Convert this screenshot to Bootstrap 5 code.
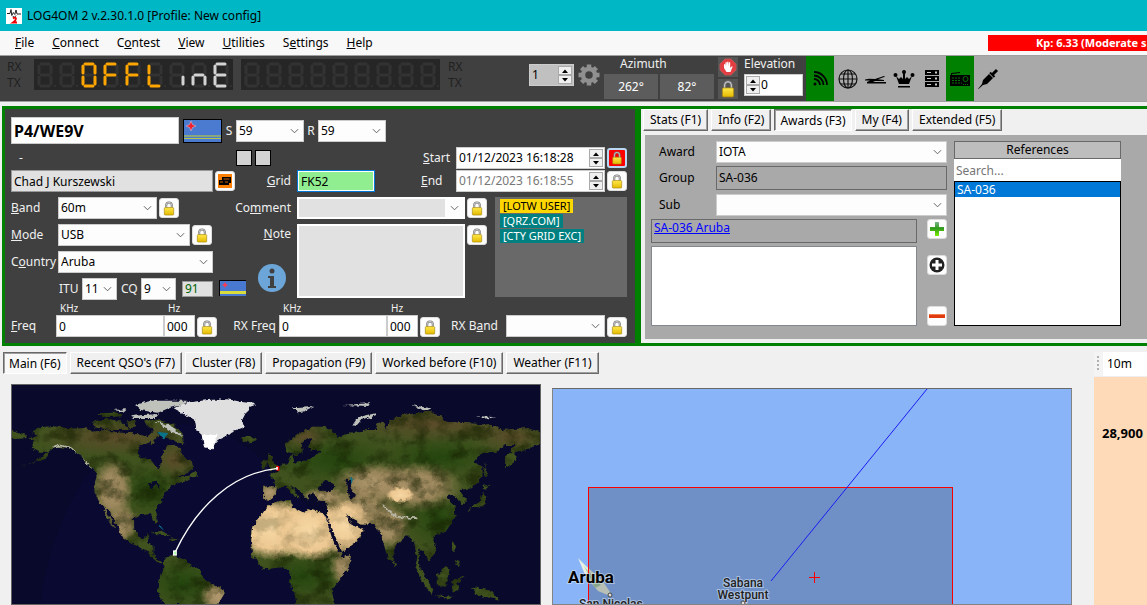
<!DOCTYPE html>
<html lang="en">
<head>
<meta charset="utf-8">
<meta name="viewport" content="width=device-width, initial-scale=1">
<title>LOG4OM 2</title>
<link href="https://cdn.jsdelivr.net/npm/bootstrap@5.3.0/dist/css/bootstrap.min.css" rel="stylesheet">
<style>
body{font:12px/16px "Noto Sans","Open Sans",sans-serif;background:#f0f0f0;color:#000;height:100vh;overflow:hidden}
svg{display:block}
button{padding:0;color:inherit;font:inherit}
.titlebar{background:#00b7c6;height:31px;padding-left:6px;gap:5px}
.menubar{background:#f8f8f8;height:24px;padding-left:6px}
.menubar .nav-link{color:#000;padding:0 9px}
.kp{background:#f00;color:#fff;font-weight:700;font-size:11px;width:159px;height:16px;padding-left:48px}
.toolbar-main{background:#404040;border-top:1px solid #a0a0a0;border-bottom:1px solid #a0a0a0;height:47px}
.lcd{background:#262626;width:199px;height:31px}
.rxtx{color:#202020;width:34px;padding:3px 0 0 7px;height:45px}
.az{background:#5c5c5c;color:#fff;border:0;width:54px;height:25px}
.white-lbl{color:#f0f0f0}
.tools{background:#a9a9a9}
.tool{width:28px;height:45px;border:0;background:transparent;display:flex;align-items:center;justify-content:center}
.tool.on{background:#008000}
.tiny{width:20px;height:20px;border:0;background:#555;display:flex;align-items:center;justify-content:center}
.frame{border:3px solid #008000}
.qso{background:#404040;color:#f0f0f0;padding:8px 8px 6px 6px;width:636px}
.fld{height:22px;border:1px solid #ccc;border-radius:0;background-color:#fff;color:#000;font-size:12px;line-height:16px;padding:0 2px;min-width:0}
select.fld{appearance:none;background:#fdfdfd url("data:image/svg+xml,%3Csvg xmlns='http://www.w3.org/2000/svg' viewBox='0 0 10 6'%3E%3Cpath d='M1 1l4 4 4-4' fill='none' stroke='%23555'/%3E%3C/svg%3E") no-repeat right 4px center/9px 6px}
#cm{box-shadow:inset 146px 0 0 0 #e1e1e1;border:2px solid #fff}
.call{width:168px;height:27px;font-size:16px;font-weight:700}
.gray-in{background:#e1e1e1;border:1px solid #999}
.lk{width:20px;height:20px;border:1px solid #ddd;border-radius:3px;background:#fdfdfd;display:flex;align-items:center;justify-content:center;flex:none}
.near{margin-left:2px}
.spinbox{background:#fff;color:#000;border:1px solid #ccc;height:22px;display:flex;align-items:center;padding:0 1px}
.spinbox input{border:0;background:transparent;min-width:0;flex:1;padding:0 0 0 1px;outline:0;font:inherit;color:inherit}
.spin{width:14px;flex:none}
.spin button{display:flex;align-items:center;justify-content:center;width:14px;height:9px;border:1px solid #aaa;background:#f0f0f0;color:#000}
.w35{width:35px}.w68{width:68px}.w78{width:78px}.w99{width:99px}.w108{width:108px}.w132{width:132px}.w149{width:149px}.w155{width:155px}.w168{width:168px}.w202{width:202px}
.lbl{width:47px;flex:none}
.rlbl{text-align:right;padding-right:6px;flex:none}
.line{display:flex;align-items:center;height:22px}
.sq{width:16px;height:16px;background:#d3d3d3;border:1px solid #000}
.gap5{gap:5px}
.info{background:#696969;width:132px;height:100px;padding:2px 5px;color:#fff;font-size:11px;line-height:14px}
.info span{padding:0 3px;margin-bottom:1px}
.tip{font-size:10px;line-height:13px}
.tabbtn{height:22px;border:1px solid;border-color:#fff #696969 #696969 #fff;box-shadow:inset -1px -1px #a0a0a0;background:#f0f0f0;padding:0 6px;white-space:nowrap}
.tabbtn.active{border-color:#696969 #fff #fff #696969;box-shadow:inset 1px 1px #a0a0a0;background:#f8f8f8;padding:2px 5px 0}
.awards{background:#a9a9a9;margin:4px 0 4px 4px;padding:6px}
.grbox{border:1px solid #696969;height:24px;padding:3px 2px;background:#a9a9a9}
.awl{width:65px;padding-left:8px;flex:none}
.refs{width:167px}
.refhead{border:1px solid #696969;height:18px;line-height:16px;background:#bdbdbd;text-align:center}
.reflist{border:1px solid #000;background:#fff;height:145px}
.reflist button{background:#0078d7;color:#fff;border:0;height:15px;line-height:15px;text-align:left;width:100%;padding-left:2px;display:block}
.world{flex:530 1 0;border:1px solid #646464;background:#09092c;min-width:0}
.local{flex:520 1 0;border:1px solid #848484;border-top-color:#696969;background:#8ab4f8;margin:4px 22px 0 11px;min-width:0}
.bandcol{width:53px;background:#ffdab9;margin-top:-32px;overflow:hidden}
.bandhead{height:25px;background:#fff;border-bottom:1px solid #eee}
.grip{width:9px;background:#f4f4f4;padding:4px 0 0 3px}
</style>
</head>
<body class="d-flex flex-column">
<svg width="0" height="0" class="position-absolute" aria-hidden="true">
<linearGradient id="gold" x2="0" y2="1"><stop stop-color="#ffe94a"/><stop offset="1" stop-color="#e3b800"/></linearGradient>
<linearGradient id="grn" x2="0" y2="1"><stop stop-color="#7ab68b"/><stop offset=".45" stop-color="#2f9a1c"/><stop offset="1" stop-color="#7af000"/></linearGradient>
<symbol id="lock" viewBox="0 0 14 16"><path d="M4 8V4.500a3 3 0 0 1 6 0V8" fill="none" stroke="#777" stroke-width="2.200"/><path d="M4 8V4.500a3 3 0 0 1 6 0V8" fill="none" stroke="#ddd" stroke-width=".8"/><rect x="2" y="7" width="10" height="8" rx="1" fill="url(#gold)" stroke="#a88a10" stroke-width=".7"/></symbol>
<symbol id="up" viewBox="0 0 6 4"><path d="M0 4l3-3.500L6 4z"/></symbol>
<symbol id="dn" viewBox="0 0 6 4"><path d="M0 0l3 3.500L6 0z"/></symbol>
<symbol id="flag" viewBox="0 0 39 24"><rect width="39" height="24" fill="#4a7bd0" stroke="#000" stroke-width="2"/><path d="M1 16h37v2H1z" fill="#8aa67c"/><path d="M1 19h37v1H1z" fill="#b8c44a"/><path d="M8 2l1.500 3.500L13 7 9.500 8.500 8 12 6.500 8.500 3 7l3.500-1.500z" fill="#f02030" stroke="#dcd" stroke-width=".5"/></symbol>
<symbol id="flag2" viewBox="0 0 27 16"><rect width="27" height="16" fill="#4878d0"/><path d="M0 11h27v3H0z" fill="#d8dc3c"/><path d="M0 16V0h27" fill="none" stroke="#000" stroke-width="2"/><path d="M6 2l1 2 2 1-2 1-1 2-1-2-2-1 2-1z" fill="#ff3850"/></symbol>
</svg>

<header class="titlebar d-flex align-items-center flex-shrink-0">
<svg width="16" height="16"><rect width="16" height="16" fill="#fff"/><path d="M1 5.500h3l1-4 .8 6 1.500-3 1.500 2 1.200-4.500 1 4H15M7 8l1 2 2-2.500" fill="none" stroke="#222"/><path d="M7 10.500q2-1.800 3 0 0 2-3 4h4" fill="none" stroke="#e00" stroke-width="1.800"/></svg>
<span>LOG4OM 2 v.2.30.1.0 [Profile: New config]</span>
</header>

<nav class="menubar d-flex align-items-center flex-shrink-0">
<a class="nav-link" href="#"><u>F</u>ile</a><a class="nav-link" href="#"><u>C</u>onnect</a><a class="nav-link" href="#">C<u>o</u>ntest</a><a class="nav-link" href="#"><u>V</u>iew</a><a class="nav-link" href="#"><u>U</u>tilities</a><a class="nav-link" href="#">S<u>e</u>ttings</a><a class="nav-link" href="#"><u>H</u>elp</a>
<div class="kp ms-auto text-nowrap overflow-hidden">Kp: 6.33 (Moderate s</div>
</nav>

<div class="toolbar-main d-flex flex-shrink-0">
<div class="rxtx">RX<br>TX</div>
<div class="lcd me-2" style="margin-top:3px" role="img" data-text="  OFFLinE"></div>
<div class="lcd" style="margin-top:3px" role="img" data-text="         "></div>
<div class="rxtx ps-2">RX<br>TX</div>
<div class="spinbox ms-auto mt-2" style="background:#c0c0c0;width:45px"><input value="1" aria-label="Radio" size="1"><span class="spin"><button aria-label="Up"><svg width="6" height="4"><use href="#up"/></svg></button><button aria-label="Down"><svg width="6" height="4"><use href="#dn"/></svg></button></span></div>
<svg class="ms-1 me-1 mt-2" width="22" height="22" viewBox="-11 -11 22 22"><circle r="6" fill="none" stroke="#909090" stroke-width="4.500"/><path id="t" d="M0-7.500V-10.500M0 7.500V10.500M-7.500 0H-10.500M7.500 0H10.500" stroke="#909090" stroke-width="4.500"/><use href="#t" transform="rotate(45)"/></svg>
<div class="me-1"><div class="white-lbl ps-3 pb-1" style="margin-bottom:-2px">Azimuth</div><div class="d-flex" style="gap:2px"><button class="az">262°</button><button class="az">82°</button></div></div>
<div class="d-flex flex-column me-1" style="gap:2px;padding-top:1px">
<button class="tiny" aria-label="Stop"><svg width="18" height="18" viewBox="0 0 18 18"><path d="M6 1h6l5 5v6l-5 5H6l-5-5V6z" fill="#e33d42" stroke="#b55"/><path d="M5 10V6.500q1-1 1.200 0V9l.3-4.500q.9-1.200 1.300 0V8L8.200 4q.9-1.200 1.300 0V8l.5-3.500q1-1 1.200 0V10l1.300-1.500q1.300-.5 1 .5l-2 5h-4z" fill="#fff"/></svg></button>
<button class="tiny" aria-label="Lock rotator"><svg width="16" height="18"><use href="#lock"/></svg></button></div>
<div style="padding:0 3px 0 2px"><label class="white-lbl d-block" style="padding-bottom:2px" for="elev">Elevation</label><div class="spinbox" style="width:59px"><span class="spin"><button aria-label="Up"><svg width="6" height="4"><use href="#up"/></svg></button><button aria-label="Down"><svg width="6" height="4"><use href="#dn"/></svg></button></span><input id="elev" value="0" size="1"></div></div>
<div class="tools d-flex">
<button class="tool on" aria-label="Cluster"><svg width="16" height="16" fill="none" stroke="#000" stroke-width="1.800"><circle cx="3" cy="13" r="1.500" fill="#000" stroke="none"/><path d="M2 8a6 6 0 0 1 6 6M2 4.500A9.500 9.500 0 0 1 11.500 14M2 1a13 13 0 0 1 13 13"/></svg></button>
<button class="tool" aria-label="Web"><svg width="20" height="20" fill="none" stroke="#111" stroke-width="1.200"><circle cx="10" cy="10" r="9"/><ellipse cx="10" cy="10" rx="4.500" ry="9"/><path d="M10 1v18M1 10h18M3 5h14M3 15h14"/></svg></button>
<button class="tool" aria-label="Keyer"><svg width="22" height="10"><path d="M0 5.500l4-.8 6 .3 9-3 1 .8-7 2.500 6 .7V7H10L8 8h13v1.500H2V8l3-1.500H0z"/></svg></button>
<button class="tool" aria-label="Awards"><svg width="22" height="19"><path d="M3 7l3 3 2-2 2 2V4h2v6l2-2 2 2 3-3-3 8H6zM5 17h12v1.500H5z"/><circle cx="11" cy="3" r="2"/><circle cx="2.500" cy="6" r="2"/><circle cx="19.500" cy="6" r="2"/></svg></button>
<button class="tool" aria-label="Server"><svg width="14" height="17"><path d="M0 0h14v5H0zM0 6h14v5H0zM0 12h14v5H0z"/><path d="M2 2.500h4M2 8.500h4M2 14.500h4" stroke="#ccc"/><path d="M10 2.500h2M10 8.500h2M10 14.500h2" stroke="#ccc" stroke-width="2"/></svg></button>
<button class="tool on" aria-label="Radio"><svg width="22" height="16"><path d="M1 4h1V2l9-1v1L3 3v1h18v11H1z"/><path d="M3 7h9M3 9.500h8M3 12h10" stroke="#087008" stroke-dasharray="2 1"/><circle cx="16.500" cy="8" r="2.500" fill="none" stroke="#087008"/><path d="M14 13.500h5" stroke="#087008" stroke-dasharray="1 1"/></svg></button>
<button class="tool" aria-label="Plug"><svg width="22" height="22"><path d="M1 21l4-5 1-4 6-6 4 4-6 6-4 1-4.500 4z"/><path d="M13 4.500l4.500 4.500" stroke="#000" stroke-width="2"/><path d="M15 7l3-3M17 5l3-3" stroke="#000" stroke-width="3"/></svg></button>
</div>
<div class="tools flex-shrink-0" style="width:145px"></div>
</div>

<main class="d-flex flex-column flex-grow-1 pt-1" style="min-height:0">
<div class="d-flex flex-shrink-0" style="margin-left:2px">
<section class="frame qso flex-shrink-0">
<div class="line" style="height:27px"><input class="fld call" value="P4/WE9V" aria-label="Callsign"><svg class="ms-1" width="39" height="24"><use href="#flag"/></svg><label class="text-center" style="width:14px" for="s">S</label><select id="s" class="fld w68"><option>59</option></select><label class="text-center" style="width:14px" for="r">R</label><select id="r" class="fld w68"><option>59</option></select></div>
<div class="line mt-1" style="height:20px"><span class="ps-2" style="width:225px">-</span><span class="sq"></span><span class="sq" style="margin-left:3px"></span><label class="rlbl ms-auto" for="st"><u>S</u>tart</label><div class="spinbox w149"><input id="st" value="01/12/2023 16:18:28"><span class="spin"><button aria-label="Up"><svg width="6" height="4"><use href="#up"/></svg></button><button aria-label="Down"><svg width="6" height="4"><use href="#dn"/></svg></button></span></div><button class="lk near" style="background:#f00;border:2px solid #b8d8f4" aria-label="Lock start"><svg width="12" height="14"><use href="#lock"/></svg></button></div>
<div class="line" style="height:20px;margin-top:3px"><input class="fld gray-in w202" value="Chad J Kurszewski" aria-label="Name"><button class="lk near" aria-label="Contact card"><svg width="14" height="14"><path fill="#ff8000" d="M0 0h14v14H0z"/><path d="M4 3h9v6h-2v2H1V6h3z"/><path d="M2 8h3M7 8h3M5.500 5h6" stroke="#c60"/></svg></button><label class="rlbl" style="width:62px" for="grid"><u>G</u>rid</label><input id="grid" class="fld w78" style="background:#90ee90;border:2px solid #fff;outline:1px solid #0078d7;outline-offset:-1px" value="FK52"><label class="rlbl ms-auto" style="width:35px;text-align:left" for="en"><u>E</u>nd</label><div class="spinbox w149" style="color:#777"><input id="en" value="01/12/2023 16:18:55"><span class="spin"><button aria-label="Up"><svg width="6" height="4"><use href="#up"/></svg></button><button aria-label="Down"><svg width="6" height="4"><use href="#dn"/></svg></button></span></div><button class="lk near" aria-label="Lock end"><svg width="14" height="15"><use href="#lock"/></svg></button></div>
<div class="d-flex" style="margin-top:6px">
<div class="d-flex flex-column gap5" style="width:222px">
<div class="line"><label class="lbl" for="bd"><u>B</u>and</label><select id="bd" class="fld w99"><option>60m</option></select><button class="lk near" aria-label="Lock band"><svg width="14" height="15"><use href="#lock"/></svg></button></div>
<div class="line"><label class="lbl" for="md"><u>M</u>ode</label><select id="md" class="fld w132"><option>USB</option></select><button class="lk near" aria-label="Lock mode"><svg width="14" height="15"><use href="#lock"/></svg></button></div>
<div class="line"><label class="lbl" for="ct">C<u>o</u>untry</label><select id="ct" class="fld w155"><option>Aruba</option></select></div>
<div class="line"><label for="itu" style="width:71px;padding-left:48px">ITU</label><select id="itu" class="fld w35"><option>11</option></select><label for="cq" style="width:24px;padding-left:4px">CQ</label><select id="cq" class="fld w35"><option>9</option></select><input class="fld gray-in" style="color:#006400;width:31px;height:16px;margin-left:6px" value="91" aria-label="Entity"></div>
</div>
<div class="d-flex flex-column align-items-end" style="width:64px">
<label class="rlbl line" for="cm"><span>Co<u>m</u>ment</span></label>
<label class="rlbl line mt-1" for="nt"><span><u>N</u>ote</span></label>
<div class="d-flex align-items-end" style="margin:19px 11px 0 0"><svg width="27" height="16"><use href="#flag2"/></svg><svg style="margin:0 0 4px 12px" width="28" height="28"><circle cx="14" cy="14" r="14" fill="#6ca6d8"/><circle cx="14" cy="7" r="2.500" fill="#404040"/><path d="M10 12h6v10h2v2h-8v-2h2v-8h-2z" fill="#404040"/></svg></div>
</div>
<div class="w168"><select id="cm" class="fld w168"><option></option></select><textarea id="nt" class="fld w168 d-block" style="height:74px;margin-top:5px;background:#e1e1e1;border:2px solid #fff;resize:none"></textarea></div>
<div class="near d-flex flex-column" style="gap:7px;padding-top:1px"><button class="lk" aria-label="Lock comment"><svg width="14" height="15"><use href="#lock"/></svg></button><button class="lk" aria-label="Lock note"><svg width="14" height="15"><use href="#lock"/></svg></button></div>
<div class="info ms-auto d-flex flex-column align-items-start"><span style="background:gold;color:#000">[LOTW USER]</span><span style="background:#008080">[QRZ.COM]</span><span style="background:#008080">[CTY GRID EXC]</span></div>
</div>
<div class="d-flex align-items-end" style="padding-top:2px">
<label class="line" style="width:45px" for="fk"><span><u>F</u>req</span></label><div><div class="tip ps-1">KHz</div><input id="fk" class="fld w108 d-block" value="0"></div><div><div class="tip ps-1">Hz</div><input class="fld d-block" style="width:31px" value="000" aria-label="Hz"></div><button class="lk near" aria-label="Lock frequency"><svg width="14" height="15"><use href="#lock"/></svg></button>
<label class="line justify-content-end" style="width:62px;padding-right:3px" for="rk"><span>RX F<u>r</u>eq</span></label><div><div class="tip ps-1">KHz</div><input id="rk" class="fld w108 d-block" value="0"></div><div><div class="tip ps-1">Hz</div><input class="fld d-block" style="width:31px" value="000" aria-label="RX Hz"></div><button class="lk near" aria-label="Lock RX frequency"><svg width="14" height="15"><use href="#lock"/></svg></button>
<label class="line ms-auto pe-2" for="rb"><span>RX B<u>a</u>nd</span></label><select id="rb" class="fld w99"><option></option></select><button class="lk near" aria-label="Lock RX band"><svg width="14" height="15"><use href="#lock"/></svg></button>
</div>
</section>
<section class="frame flex-grow-1 border-end-0 d-flex flex-column">
<div class="d-flex" style="gap:3px;margin-left:2px"><button class="tabbtn">Stats (F1)</button><button class="tabbtn">Info (F2)</button><button class="tabbtn active">Awards (F3)</button><button class="tabbtn">My (F4)</button><button class="tabbtn">Extended (F5)</button></div>
<div class="awards flex-grow-1 d-flex" style="gap:7px">
<div style="width:296px">
<div class="d-flex align-items-center" style="margin-bottom:3px"><label class="awl" for="aw">Award</label><select id="aw" class="fld flex-grow-1"><option>IOTA</option></select></div>
<div class="d-flex mb-1 align-items-center"><span class="awl">Group</span><div class="grbox flex-grow-1">SA-036</div></div>
<div class="d-flex align-items-center" style="margin-bottom:3px"><label class="awl" for="sb">Sub</label><select id="sb" class="fld flex-grow-1"><option></option></select></div>
<div class="d-flex justify-content-between"><div style="width:266px"><div class="grbox py-0"><a href="#" style="color:#00f">SA-036 Aruba</a></div><div class="bg-white" style="height:80px;margin-top:3px;border:1px solid #828790"></div></div>
<div class="d-flex flex-column justify-content-between"><button class="lk" aria-label="Add"><svg width="16" height="16"><path d="M6 1h4v5h5v4h-5v5H6v-5H1V6h5z" fill="url(#grn)"/></svg></button><button class="lk mb-3" aria-label="Add custom"><svg width="16" height="16"><circle cx="8" cy="8" r="7.500" fill="#222"/><path d="M6.500 3h3v3.500H13v3H9.500V13h-3V9.500H3v-3h3.500z" fill="#fff"/></svg></button><button class="lk" aria-label="Remove"><svg width="16" height="6"><path d="M0 1h16v4H0z" fill="#e23a10"/><path d="M0 1h16v1H0z" fill="#f08050"/></svg></button></div></div>
</div>
<div class="refs"><div class="refhead">References</div><input class="fld w-100 d-block border-0" placeholder="Search..." aria-label="Search references"><div class="reflist"><button>SA-036</button></div></div>
</div>
</section>
</div>

<div class="d-flex flex-shrink-0" style="gap:3px;margin:6px 0 10px 3px"><button class="tabbtn active">Main (F6)</button><button class="tabbtn">Recent QSO's (F7)</button><button class="tabbtn">Cluster (F8)</button><button class="tabbtn">Propagation (F9)</button><button class="tabbtn">Worked before (F10)</button><button class="tabbtn">Weather (F11)</button></div>

<div class="d-flex flex-grow-1" style="padding-left:11px;min-height:0">
<div class="world overflow-hidden">
<svg width="100%" height="100%" viewBox="0 0 528 220" preserveAspectRatio="xMinYMin slice">
<defs>
<filter id="rough" x="0" y="0" width="1" height="1" color-interpolation-filters="sRGB"><feTurbulence type="fractalNoise" baseFrequency=".08" numOctaves="3" seed="4"/><feDisplacementMap in="SourceGraphic" scale="14" xChannelSelector="R" yChannelSelector="G"/></filter>
<filter id="grain" x="0" y="0" width="1" height="1" color-interpolation-filters="sRGB"><feTurbulence type="fractalNoise" baseFrequency=".018 .022" numOctaves="5" seed="9"/><feColorMatrix values="0 0 0 0 .08 0 0 0 0 .12 0 0 0 0 0 3 0 0 0 -1.300"/></filter>
<radialGradient id="sand"><stop stop-color="#f6d8a4"/><stop offset=".65" stop-color="#edc892"/><stop offset="1" stop-color="#ecc48c" stop-opacity="0"/></radialGradient>
<radialGradient id="tan"><stop stop-color="#b39a70"/><stop offset=".5" stop-color="#a58c62" stop-opacity=".9"/><stop offset="1" stop-color="#a58c62" stop-opacity="0"/></radialGradient>
<radialGradient id="brn"><stop stop-color="#5c4c2a"/><stop offset="1" stop-color="#5c4c2a" stop-opacity="0"/></radialGradient>
<radialGradient id="dg"><stop stop-color="#24460e"/><stop offset="1" stop-color="#24460e" stop-opacity="0"/></radialGradient>
<clipPath id="land"><path d="M90 155L115 142 150 138 200 146 245 145 265 155 300 150 340 158 375 160 400 165 420 170 440 150 455 165 440 180 420 190 400 195 390 212 400 232 430 240 445 262 455 265 460 240 465 215 480 192 500 195 520 215 525 235 548 250 550 268 520 285 500 292 530 290 545 285 540 300 510 308 485 320 472 335 465 355 445 380 442 395 450 425 445 435 435 415 430 403 400 405 382 415 382 445 392 468 408 478 420 462 425 480 418 490 437 497 437 525 450 542 463 545 455 552 435 535 420 515 385 495 350 472 340 445 325 420 310 390 285 370 270 340 268 315 275 290 270 270 245 250 230 225 200 205 160 200 145 210 100 245 45 265 130 236 140 215 110 215 90 205 95 185 85 175 105 165zM34 150L75 165 75 175 34 178zM300 385L330 448 322 442 295 395zM265 125L305 115 345 125 370 150 320 150 270 142zM275 100L330 98 350 108 300 112zM360 125L385 120 390 140 370 145zM410 125L440 118 490 130 520 160 525 195 490 180 460 165 425 140zM430 175L445 185 430 195zM540 285L555 272 565 290 548 292zM688 172L715 168 730 178 712 188 692 183zM430 458L460 452 490 470 470 468zM480 475L512 478 490 484zM465 545L480 525 500 528 530 540 545 560 570 570 585 605 635 625 640 640 620 675 468 675 450 635 455 600 465 570zM765 375L800 362 828 360 832 380 865 398 880 388 920 400 935 420 950 470 970 515 975 532 1000 525 995 560 965 605 945 630 955 675 845 675 840 640 825 605 828 575 800 562 755 568 735 550 718 525 716 480 722 440 745 405zM935 362L970 362 988 405 1003 430 1036 450 1020 480 975 515 960 480 940 430 932 395zM750 320L785 318 780 300 768 285 790 275 800 258 825 245 825 228 838 225 835 250 865 245 885 235 915 215 905 207 885 212 880 195 890 175 875 175 860 190 862 215 845 225 820 220 812 195 850 160 890 140 925 140 960 160 955 175 930 180 980 165 1010 155 1050 150 1080 150 1070 130 1090 125 1100 150 1110 120 1150 105 1220 95 1260 110 1270 125 1330 130 1400 135 1430 150 1500 145 1539 155 1539 190 1500 210 1470 215 1468 245 1440 265 1440 230 1470 195 1440 195 1415 215 1370 220 1350 245 1375 260 1375 290 1345 325 1310 330 1328 360 1320 378 1305 355 1285 345 1270 350 1295 375 1298 410 1270 455 1240 465 1235 480 1243 515 1220 545 1210 520 1195 505 1195 555 1215 600 1205 590 1183 560 1190 530 1180 490 1165 470 1160 465 1125 500 1118 545 1105 535 1085 460 1070 445 1065 432 1025 430 990 405 965 365 930 365 905 360 895 335 880 345 878 362 860 340 830 315 845 340 855 352 840 350 815 318 790 325 785 345 765 362 750 358zM765 222L778 230 775 245 795 262 770 272 765 250zM745 245L762 240 758 262 745 265zM1330 395L1350 375 1370 365 1376 335 1386 350 1378 378 1345 385zM1375 318L1398 314 1382 330zM1382 245L1390 290 1380 290zM1290 480L1300 500 1292 518zM1295 540L1312 545 1308 562zM1245 590L1270 558 1285 570 1270 620 1245 615zM1185 560L1235 625 1230 642 1200 600zM1290 600L1325 590 1302 608 1308 630 1290 635zM1345 620L1400 632 1425 665 1400 655 1360 645zM1235 645L1290 650 1285 658zM1120 540L1130 556 1122 562z"/></clipPath>
</defs>
<g transform="scale(.3508 .3333) translate(-34 -15)">
<path d="M34 675h80Q150 420 260 270L520 130Q700 160 780 280L900 400V675z" fill="#0a0a36" opacity=".6"/>
<g filter="url(#rough)">
<g clip-path="url(#land)"><path d="M34 15h1505v660H34z" fill="#40521e"/>
<g fill="url(#brn)"><ellipse cx="330" cy="170" rx="240" ry="60"/><ellipse cx="500" cy="240" rx="80" ry="60"/><ellipse cx="1230" cy="130" rx="280" ry="60"/><ellipse cx="1460" cy="170" rx="120" ry="50"/><ellipse cx="870" cy="170" rx="70" ry="50"/></g>
<g fill="url(#dg)"><ellipse cx="430" cy="330" rx="80" ry="80"/><ellipse cx="950" cy="240" rx="180" ry="70"/><ellipse cx="1250" cy="230" rx="170" ry="60"/><ellipse cx="520" cy="610" rx="110" ry="80"/><ellipse cx="860" cy="590" rx="130" ry="70"/><ellipse cx="1250" cy="420" rx="90" ry="90"/></g>
<g fill="url(#tan)"><ellipse cx="320" cy="330" rx="60" ry="100"/><ellipse cx="350" cy="430" rx="45" ry="60"/><ellipse cx="1070" cy="310" rx="130" ry="65"/><ellipse cx="1190" cy="320" rx="130" ry="75"/><ellipse cx="1030" cy="390" rx="100" ry="65"/><ellipse cx="1110" cy="440" rx="60" ry="70"/><ellipse cx="925" cy="350" rx="70" ry="30"/><ellipse cx="768" cy="340" rx="40" ry="30"/><ellipse cx="985" cy="560" rx="45" ry="60"/><ellipse cx="620" cy="650" rx="50" ry="50"/></g>
<path d="M34 15h1505v660H34z" filter="url(#grain)" opacity=".6"/>
<g fill="url(#sand)"><ellipse cx="780" cy="445" rx="125" ry="95"/><ellipse cx="885" cy="450" rx="110" ry="95"/><ellipse cx="980" cy="440" rx="80" ry="85"/><ellipse cx="1140" cy="345" rx="40" ry="25"/></g>
<path d="M700 360h340v170H700z" filter="url(#grain)" opacity=".2"/>
<path d="M150 200Q185 190 215 215L265 270M1090 375L1130 410 1190 415" fill="none" stroke="#b8b8a8" stroke-width="5"/>
</g>
<path d="M905 325L930 300 960 318 940 333 915 332zM985 300L1005 300 1000 320 1012 350 1000 362 990 335zM928 410L945 440 958 480 972 518 966 520 945 470zM988 405L1003 430 1020 432 1012 442 995 430zM420 310L450 305 455 325 445 315 430 328z" fill="#09092c"/>
<path d="M495 85L530 68 590 60 650 58 690 66 732 72 710 80 700 100 690 120 695 140 660 155 650 165 620 180 605 208 580 200 575 165 560 150 555 120 530 105z" fill="#dfdfe0"/>
<path d="M575 165L620 165 605 208 583 200z" fill="#fff"/>
<path d="M385 75L430 62 530 62 520 75 480 85 450 98 400 90zM370 108L450 102 445 114 380 114zM320 90L360 88 350 96zM440 122L490 138 524 172 490 155zM1005 135L1020 112 1070 100 1075 104 1030 120 1015 138zM832 82L895 78 870 92 850 100zM975 75L1055 70 1050 78zM1170 75L1230 85 1215 92zM1360 108L1415 112 1380 116z" fill="#bfc1bb"/>
<path d="M448 155L480 160 465 178zM452 430L470 455 455 440zM997 295L1008 297 1004 310z" fill="#0b7288"/>
</g>
<path d="M498 519C560 380 660 280 791 265" fill="none" stroke="#fff" stroke-width="4"/>
<path d="M493 511h11v16h-11z" fill="#fff"/><path d="M496 515h6v8h-6z" fill="#afa"/><path d="M788 258h8v14h-8z" fill="#f00"/><path d="M787 261h5v8h-5z" fill="#fff"/>
</g>
</svg></div>
<div class="local overflow-hidden">
<svg width="100%" height="100%" font-family="Roboto,sans-serif">
<path d="M25 169l8 8 16 14 8 12v4l-12-5-12-14z" fill="#e5efe4"/><path d="M31 177l17 19-6 3z" fill="#a9cfae"/><path d="M184 217l8-6 4 6z" fill="#dfe8ea"/>
<rect x="35" y="98" width="365" height="200" fill="#000" fill-opacity=".2"/>
<path d="M35 98h365v1H35zM35 98h1v200h-1zM399 98h1v200h-1z" fill="#f00"/>
<path d="M374 0L218 192" stroke="#1c1cf0"/><path d="M256 188.500h11M261.500 183v11" stroke="#f00"/>
<g stroke="#dde8f5" stroke-opacity=".55" stroke-width="2" paint-order="stroke" fill="#222"><text x="15" y="194" font-size="17" font-weight="700" fill="#000">Aruba</text><g font-size="12" font-weight="500"><text x="26" y="219">San Nicolas</text><text x="190" y="198" text-anchor="middle">Sabana</text><text x="190" y="210" text-anchor="middle">Westpunt</text></g></g>
<circle cx="57" cy="206" r="2" fill="#ddd" stroke="#444"/><circle cx="190" cy="214" r="2" fill="#ddd" stroke="#444"/>
</svg></div>
<aside class="bandcol flex-shrink-0"><div class="bandhead d-flex"><div class="grip"><svg width="3" height="16"><path d="M1 0v16" stroke="#b0b0b0" stroke-width="2" stroke-dasharray="2 2"/></svg></div><div class="ps-1 pt-1">10m</div></div><div class="fw-bold ps-2 pt-5" style="font-size:13px">28,900</div></aside>
</div>
</main>
<script src="https://cdn.jsdelivr.net/npm/bootstrap@5.3.0/dist/js/bootstrap.bundle.min.js"></script>
<script>
// Seven-segment display: segments a-g for each cell, unlit ones drawn dim
const seg={a:'M2 0h8',b:'M12 2v7',c:'M12 13v7',d:'M2 22h8',e:'M0 13v7',f:'M0 2v7',g:'M2 11h8'};
const map={O:'abcdef',F:'aefg',L:'def',i:'c',n:'ceg',E:'adefg',' ':''};
document.querySelectorAll('.lcd').forEach(el=>{
  let s='';
  [...el.dataset.text].forEach((ch,i)=>{
    const on=map[ch],col=i<6?'#ffa500':'#d3d3d3';
    s+=`<g transform="translate(${5+i*22} 5)">`;
    for(const off of [true,false])for(const k in seg)if(on.includes(k)!==off)s+=`<path d="${seg[k]}" stroke="${off?'#333':col}"/>`;
    s+='<circle cx="16" cy="22" r="1" stroke="none" fill="#363636"/></g>';
  });
  el.innerHTML=`<svg width="199" height="31" fill="none" stroke-width="3" stroke-linecap="round">${s}</svg>`;
  el.setAttribute('aria-label',el.dataset.text.trim()||'blank');
});
</script>
</body>
</html>
